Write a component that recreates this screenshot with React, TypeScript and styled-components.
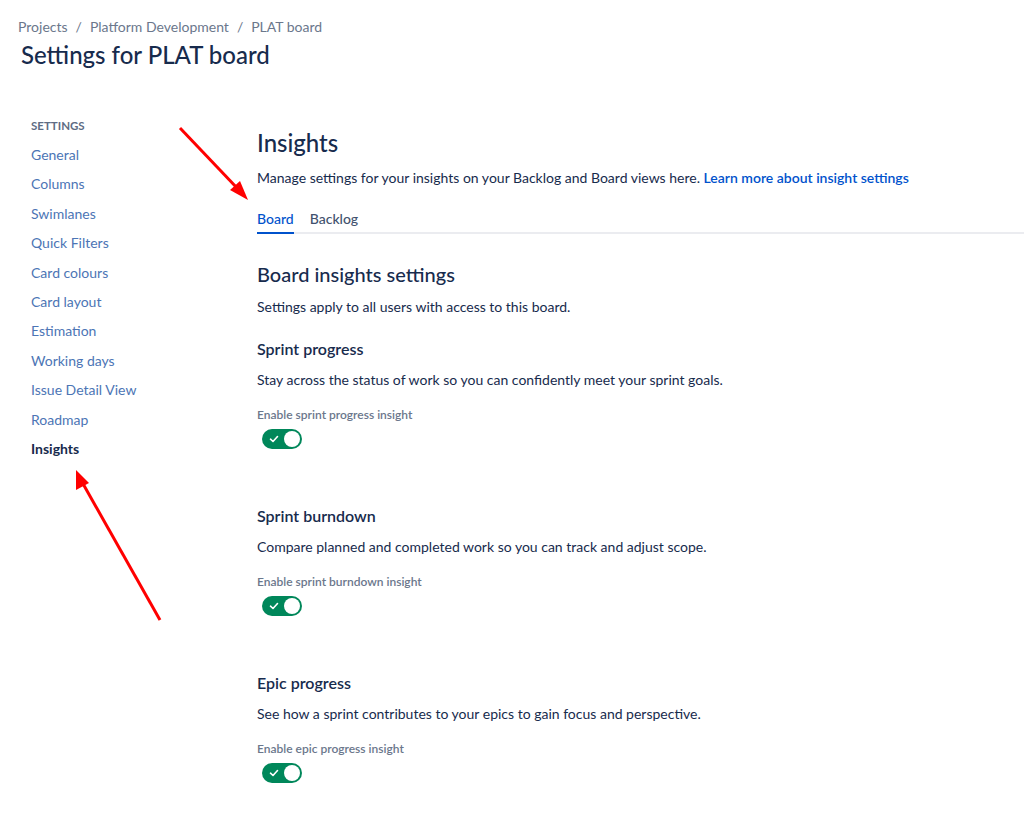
import React, { FC, useState } from "react";
import styled, { createGlobalStyle } from "styled-components";

const GlobalStyle = createGlobalStyle`
  html, body {
    margin: 0;
    padding: 0;
    background: #fff;
  }
  body {
    font-family: Lato, "Liberation Sans", Arial, sans-serif;
    color: #172b4d;
    -webkit-font-smoothing: antialiased;
  }
`;

const navItems = [
  "General",
  "Columns",
  "Swimlanes",
  "Quick Filters",
  "Card colours",
  "Card layout",
  "Estimation",
  "Working days",
  "Issue Detail View",
  "Roadmap",
  "Insights",
];

const insights = [
  {
    id: "sprint-progress",
    title: "Sprint progress",
    text: "Stay across the status of work so you can confidently meet your sprint goals.",
    label: "Enable sprint progress insight",
  },
  {
    id: "sprint-burndown",
    title: "Sprint burndown",
    text: "Compare planned and completed work so you can track and adjust scope.",
    label: "Enable sprint burndown insight",
  },
  {
    id: "epic-progress",
    title: "Epic progress",
    text: "See how a sprint contributes to your epics to gain focus and perspective.",
    label: "Enable epic progress insight",
  },
];

const Toggle: FC<{ on: boolean; onChange: () => void }> = ({ on, onChange }) => (
  <ToggleTrack $on={on} onClick={onChange} role="switch" aria-checked={on}>
    <svg width="10" height="10" viewBox="0 0 10 10">
      <path
        d="M1.5 5.2 L4 7.5 L8.5 2.5"
        fill="none"
        stroke="#fff"
        strokeWidth="1.6"
        strokeLinecap="round"
        strokeLinejoin="round"
      />
    </svg>
    <Knob $on={on} />
  </ToggleTrack>
);

const App: FC = () => {
  const [tab, setTab] = useState("Board");
  const [enabled, setEnabled] = useState<Record<string, boolean>>({
    "sprint-progress": true,
    "sprint-burndown": true,
    "epic-progress": true,
  });

  return (
    <Page>
      <GlobalStyle />
      <Header>
        <Breadcrumbs>
          <Crumb>Projects</Crumb>
          <Sep>/</Sep>
          <Crumb>Platform Development</Crumb>
          <Sep>/</Sep>
          <Crumb>PLAT board</Crumb>
        </Breadcrumbs>
        <Title>Settings for PLAT board</Title>
      </Header>

      <Body>
        <Sidebar>
          <SideHeading>Settings</SideHeading>
          {navItems.map((item) => (
            <NavLink key={item} $active={item === "Insights"}>
              {item}
            </NavLink>
          ))}
        </Sidebar>

        <Main>
          <PageHeading>Insights</PageHeading>
          <Intro>
            Manage settings for your insights on your Backlog and Board views
            here. <Link>Learn more about insight settings</Link>
          </Intro>

          <Tabs>
            {["Board", "Backlog"].map((t) => (
              <Tab key={t} $active={tab === t} onClick={() => setTab(t)}>
                {t}
              </Tab>
            ))}
          </Tabs>

          <SectionHeading>Board insights settings</SectionHeading>
          <Text>Settings apply to all users with access to this board.</Text>

          {insights.map((item) => (
            <Insight key={item.id}>
              <InsightTitle>{item.title}</InsightTitle>
              <Text>{item.text}</Text>
              <FieldLabel>{item.label}</FieldLabel>
              <Toggle
                on={enabled[item.id]}
                onChange={() =>
                  setEnabled({ ...enabled, [item.id]: !enabled[item.id] })
                }
              />
            </Insight>
          ))}
        </Main>
      </Body>

      {/* red annotation arrows */}
      <Annotations width="1024" height="825" viewBox="0 0 1024 825">
        <line x1="180" y1="128" x2="238" y2="189" stroke="#ff0000" strokeWidth="3" />
        <polygon points="248,200 230,190 240,181" fill="#ff0000" />
        <line x1="160" y1="620" x2="82" y2="482" stroke="#ff0000" strokeWidth="3" />
        <polygon points="76,470 76,490 89,483" fill="#ff0000" />
      </Annotations>
    </Page>
  );
};

const Page = styled.div`
  position: relative;
  width: 1024px;
  min-height: 825px;
  overflow: hidden;
`;

const Header = styled.header`
  padding: 17px 0 0 18px;
`;

const Breadcrumbs = styled.nav`
  display: flex;
  align-items: center;
  font-size: 14px;
  line-height: 20px;
  color: #6b778c;
`;

const Crumb = styled.span``;

const Sep = styled.span`
  padding: 0 8px;
`;

const Title = styled.h1`
  margin: 4px 0 0 3px;
  font-size: 24px;
  line-height: 28px;
  font-weight: 500;
  color: #172b4d;
`;

const Body = styled.div`
  display: grid;
  grid-template-columns: 226px 1fr;
  padding: 49px 0 40px 31px;
`;

const Sidebar = styled.aside`
  display: flex;
  flex-direction: column;
`;

const SideHeading = styled.div`
  font-size: 11.5px;
  line-height: 16px;
  font-weight: 700;
  text-transform: uppercase;
  color: #5e6c84;
  margin-bottom: 6px;
`;

const NavLink = styled.a<{ $active?: boolean }>`
  display: block;
  font-size: 14px;
  line-height: 29.4px;
  color: ${({ $active }) => ($active ? "#172b4d" : "#4c75b5")};
  font-weight: ${({ $active }) => ($active ? 700 : 400)};
  cursor: pointer;
`;

const Main = styled.main`
  padding-top: 11px;
`;

const PageHeading = styled.h2`
  margin: 0;
  font-size: 24px;
  line-height: 28px;
  font-weight: 500;
  color: #172b4d;
`;

const Intro = styled.p`
  margin: 11px 0 0;
  font-size: 14px;
  line-height: 20px;
  color: #172b4d;
`;

const Link = styled.a`
  color: #0052cc;
  font-weight: 600;
  cursor: pointer;
`;

const Tabs = styled.div`
  display: flex;
  gap: 16px;
  margin-top: 21px;
  border-bottom: 2px solid #ebecf0;
`;

const Tab = styled.button<{ $active?: boolean }>`
  position: relative;
  border: none;
  background: none;
  padding: 0 0 3px;
  font: inherit;
  font-size: 14px;
  line-height: 20px;
  font-weight: 500;
  color: ${({ $active }) => ($active ? "#0052cc" : "#42526e")};
  cursor: pointer;

  &::after {
    content: "";
    position: absolute;
    left: 0;
    right: 0;
    bottom: -2px;
    height: 2px;
    background: ${({ $active }) => ($active ? "#0052cc" : "transparent")};
  }
`;

const SectionHeading = styled.h3`
  margin: 28px 0 0;
  font-size: 20px;
  line-height: 24px;
  font-weight: 500;
  color: #172b4d;
`;

const Text = styled.p`
  margin: 11px 0 0;
  font-size: 14px;
  line-height: 20px;
  color: #172b4d;
`;

const Insight = styled.section`
  margin-top: 22px;

  & + & {
    margin-top: 57px;
  }
`;

const InsightTitle = styled.h4`
  margin: 0;
  font-size: 16px;
  line-height: 20px;
  font-weight: 600;
  color: #172b4d;
`;

const FieldLabel = styled.div`
  margin-top: 17px;
  font-size: 12px;
  line-height: 16px;
  font-weight: 600;
  color: #6b778c;
`;

const ToggleTrack = styled.div<{ $on: boolean }>`
  display: flex;
  align-items: center;
  justify-content: space-between;
  box-sizing: border-box;
  width: 40px;
  height: 20px;
  margin: 6px 0 0 5px;
  padding: 0 2px 0 7px;
  border-radius: 10px;
  background: ${({ $on }) => ($on ? "#00875a" : "#a5adba")};
  cursor: pointer;
`;

const Knob = styled.span<{ $on: boolean }>`
  width: 16px;
  height: 16px;
  border-radius: 50%;
  background: #fff;
`;

const Annotations = styled.svg`
  position: absolute;
  left: 0;
  top: 0;
  pointer-events: none;
`;

export default App;
